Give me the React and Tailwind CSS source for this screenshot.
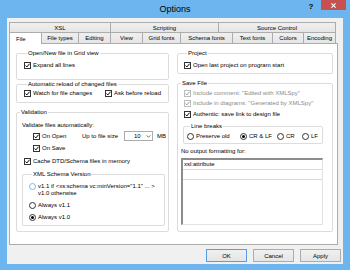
import React from "react";

function Check({ checked, disabled, className = "", children }) {
  return (
    <div className={`flex items-center h-[10px] ${disabled ? "text-[#8a8a8a]" : ""} ${className}`}>
      <span
        className={`w-[7px] h-[7px] shrink-0 border bg-white flex items-center justify-center ${
          disabled ? "border-[#bcbcbc]" : "border-[#333]"
        }`}
      >
        {checked && (
          <svg viewBox="0 0 7 7" className="w-[5px] h-[5px]">
            <path d="M0.6 3.5 L2.6 5.5 L6.4 1" fill="none" stroke={disabled ? "#9a9a9a" : "#000"} strokeWidth="1.4" />
          </svg>
        )}
      </span>
      <span className="ml-[2px] whitespace-nowrap">{children}</span>
    </div>
  );
}

function Radio({ checked, hover, className = "", children }) {
  return (
    <div className={`flex items-center h-[10px] ${className}`}>
      <span
        className={`w-[7px] h-[7px] shrink-0 rounded-full border bg-white flex items-center justify-center ${
          hover ? "border-[#6aaee8]" : "border-[#333]"
        }`}
      >
        {checked && <span className="w-[3px] h-[3px] rounded-full bg-black" />}
      </span>
      <span className="ml-[2px] whitespace-nowrap">{children}</span>
    </div>
  );
}

function Group({ title, className = "", children }) {
  return (
    <fieldset className={`border border-[#dcdcdc] rounded-[2px] min-w-0 ${className}`}>
      <legend className="ml-[3px] px-[1px] leading-[8px]">{title}</legend>
      {children}
    </fieldset>
  );
}

const backTabs = [
  ["XSL", "w-[101px]"],
  ["Scripting", "w-[108px]"],
  ["Source Control", "w-[118px] border-r"],
];

const frontTabs = [
  ["File types", "w-[37px]"],
  ["Editing", "w-[32px]"],
  ["View", "w-[32px]"],
  ["Grid fonts", "w-[38px]"],
  ["Schema fonts", "w-[52px]"],
  ["Text fonts", "w-[40px]"],
  ["Colors", "w-[31px]"],
  ["Encoding", "w-[33px] border-r"],
];

export default function App() {
  return (
    <div className="w-[350px] h-[270px] bg-[#6db5ef] flex flex-col font-['Liberation_Sans',Arial,sans-serif] text-[6px] text-black">
      {/* title bar */}
      <div className="h-[18px] grid grid-cols-[1fr_auto_1fr]">
        <div />
        <div className="text-[9px] leading-[18px]">Options</div>
        <div className="flex justify-end items-start pr-[4px]">
          <span className="w-[10px] mt-[2px] text-center text-[8px] leading-[9px] font-bold">?</span>
          <div className="ml-[5px] w-[25px] h-[10px] bg-[#c75050] flex items-center justify-center">
            <svg viewBox="0 0 6 6" className="w-[5px] h-[5px]">
              <path d="M0.5 0.5 L5.5 5.5 M5.5 0.5 L0.5 5.5" stroke="#fff" strokeWidth="1.3" />
            </svg>
          </div>
        </div>
      </div>

      {/* client area */}
      <div className="mx-[7px] h-[246px] bg-[#f0f0f0] flex flex-col">
        <div className="ml-[2px] mt-[4px] flex flex-col">
          <div className="flex h-[10px]">
            {backTabs.map(([label, w]) => (
              <div
                key={label}
                className={`${w} h-[10px] border-t border-l border-[#acacac] bg-linear-to-b from-[#f0f0f0] to-[#e5e5e5] flex items-center justify-center leading-none`}
              >
                {label}
              </div>
            ))}
          </div>
          <div className="flex h-[11px] items-start">
            <div className="w-[33px] h-[12px] -mr-[1px] relative z-10 bg-white border-t border-l border-r border-[#acacac] flex items-start pl-[6px] pt-[3px] leading-none">
              File
            </div>
            {frontTabs.map(([label, w]) => (
              <div
                key={label}
                className={`${w} h-[11px] border-t border-l border-[#acacac] bg-linear-to-b from-[#f0f0f0] to-[#e5e5e5] flex items-center justify-center leading-none`}
              >
                {label}
              </div>
            ))}
          </div>

          {/* panel */}
          <div className="w-[329px] h-[202px] bg-white border border-[#acacac] flex pl-[6px]">
            {/* left column */}
            <div className="w-[153px] flex flex-col">
              <Group title="Open/New file in Grid view" className="mt-[5px] pt-[3px] pb-[9px] pl-[7px]">
                <Check checked>Expand all lines</Check>
              </Group>
              <Group title="Automatic reload of changed files" className="pb-[4px] pl-[7px]">
                <div className="flex">
                  <Check checked className="w-[81px]">Watch for file changes</Check>
                  <Check checked>Ask before reload</Check>
                </div>
              </Group>
              <Group title="Validation" className="mt-[5px] pt-[4px] pb-[5px]">
                <div className="ml-[5px] h-[10px] flex items-center">Validate files automatically:</div>
                <div className="mt-[1px] flex items-center h-[10px]">
                  <Check checked className="ml-[16px] w-[49px]">On Open</Check>
                  <span>Up to file size</span>
                  <div className="ml-[6px] w-[29px] h-[10px] border border-[#acacac] bg-white flex items-center">
                    <span className="ml-[9px]">10</span>
                    <svg viewBox="0 0 6 4" className="ml-[5px] w-[5px] h-[3px]">
                      <path d="M0.5 0.5 L3 3 L5.5 0.5" fill="none" stroke="#333" strokeWidth="0.9" />
                    </svg>
                  </div>
                  <span className="ml-[4px]">MB</span>
                </div>
                <Check checked className="mt-[2px] ml-[16px]">On Save</Check>
                <Check checked className="mt-[3px] ml-[7px]">Cache DTD/Schema files in memory</Check>
                <Group title="XML Schema Version" className="mt-[4px] ml-[5px] mr-[3px] pt-[5px] pb-[3px] pl-[6px]">
                  <div className="flex items-start">
                    <span className="w-[7px] h-[7px] shrink-0 rounded-full border border-[#7db7ea] bg-white" />
                    <div className="ml-[2px] leading-[7px]">
                      <div className="whitespace-nowrap">{'v1.1 if <xs:schema vc:minVersion="1.1" ... >'}</div>
                      <div>v1.0 otherwise</div>
                    </div>
                  </div>
                  <Radio className="mt-[3px]">Always v1.1</Radio>
                  <Radio checked className="mt-[2px]">Always v1.0</Radio>
                </Group>
              </Group>
            </div>

            {/* right column */}
            <div className="ml-[8px] w-[156px] flex flex-col">
              <Group title="Project" className="mt-[5px] pt-[3px] pb-[3px] pl-[6px]">
                <Check checked>Open last project on program start</Check>
              </Group>
              <Group title="Save File" className="mt-[5px] pt-[1px] pb-[6px]">
                <Check checked disabled className="ml-[6px]">Include comment: "Edited with XMLSpy"</Check>
                <Check checked disabled className="ml-[6px]">Include in diagrams: "Generated by XMLSpy"</Check>
                <Check checked className="mt-[1px] ml-[6px]">Authentic: save link to design file</Check>
                <Group title="Line breaks" className="mt-[3px] ml-[5px] mr-[9px] pt-[1px] pb-[2px] pl-[3px]">
                  <div className="flex">
                    <Radio className="w-[53px]">Preserve old</Radio>
                    <Radio checked className="w-[37px]">CR &amp; LF</Radio>
                    <Radio className="w-[25px]">CR</Radio>
                    <Radio>LF</Radio>
                  </div>
                </Group>
                <div className="mt-[2px] ml-[3px] h-[10px] flex items-center">No output formatting for:</div>
                <div className="mt-[2px] ml-[3px] w-[142px] h-[67px] bg-white border-t-2 border-l-2 border-[#8c8c8c] border-r border-b border-r-[#e3e3e3] border-b-[#e3e3e3]">
                  <div className="h-[10px] border-b border-[#d9d9d9] flex items-center pl-[1px]">xsl:attribute</div>
                  <div className="h-[10px] border-b border-[#d9d9d9]" />
                </div>
              </Group>
            </div>
          </div>
        </div>

        {/* buttons */}
        <div className="mt-[4px] pr-[2px] flex justify-end gap-[6px]">
          <button className="w-[41px] h-[13px] border border-[#569de5] bg-linear-to-b from-[#f0f0f0] to-[#e5e5e5] leading-none">OK</button>
          <button className="w-[41px] h-[13px] border border-[#acacac] bg-linear-to-b from-[#f0f0f0] to-[#e5e5e5] leading-none">Cancel</button>
          <button className="w-[41px] h-[13px] border border-[#acacac] bg-linear-to-b from-[#f0f0f0] to-[#e5e5e5] leading-none">Apply</button>
        </div>
      </div>
    </div>
  );
}
